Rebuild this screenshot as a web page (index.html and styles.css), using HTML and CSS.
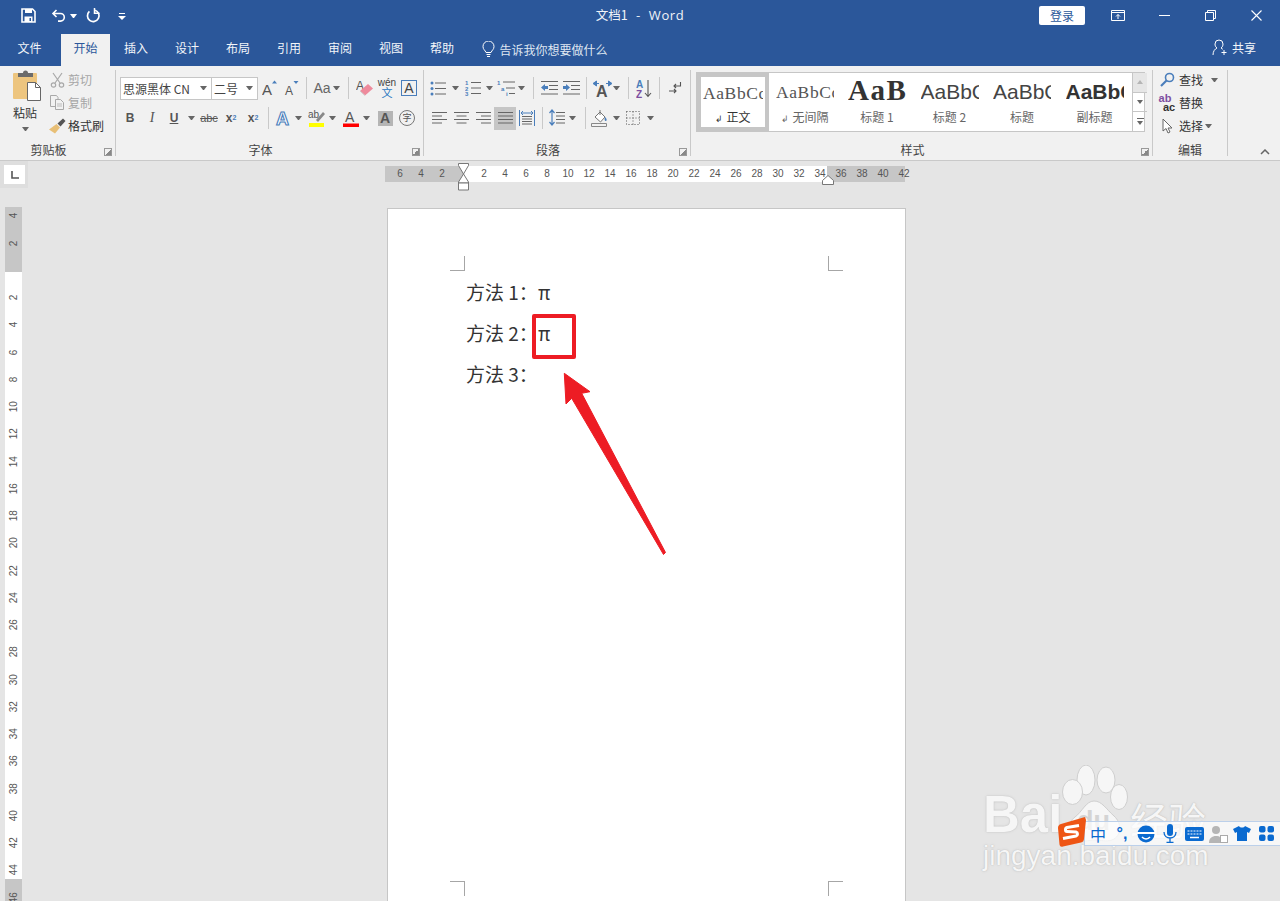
FILE: index.html
```html
<!DOCTYPE html>
<html lang="zh-CN">
<head>
<meta charset="UTF-8" />
<title>文档1 - Word</title>
<link rel="stylesheet" href="styles.css">
</head>
<body>
<!-- title bar -->
<header class="titlebar">
  <div class="qat">
    <svg class="q-save" width="15" height="15" viewBox="0 0 15 15"><path d="M1 1h10.5L14 3.5V14H1z" fill="none" stroke="#fff" stroke-width="1.6"/><path d="M4 1h7v4H4z" fill="#fff"/><path d="M3.5 8.5h8V14h-8z" fill="#fff"/><path d="M8.5 10H10v3H8.5z" fill="#2b579a"/></svg>
    <svg class="q-undo" width="15" height="15" viewBox="0 0 15 15"><path d="M5.5 2 2 5.5 5.5 9M2 5.5h7.5a3.800 3.800 0 0 1 0 7.600H7" fill="none" stroke="#fff" stroke-width="1.6"/></svg>
    <span class="drop white q-d1"></span>
    <svg class="q-redo" width="15" height="15" viewBox="0 0 15 15"><path d="M3.4 3.4A5.8 5.8 0 1 0 9 2.2" fill="none" stroke="#fff" stroke-width="1.7"/><path d="M8.500 0v5.200h5" fill="none" stroke="#fff" stroke-width="1.5"/></svg>
    <svg class="q-more" width="8" height="8" viewBox="0 0 8 8"><path d="M1 1h6v1H1z" fill="#fff"/><path d="M0 4h8L4 8z" fill="#fff"/></svg>
  </div>
  <div class="doc-title">文档1 &nbsp;&nbsp;-&nbsp;&nbsp; <span class="word">Word</span></div>
  <div class="winbtns">
    <span class="login">登录</span>
    <svg class="w-disp" width="14" height="11" viewBox="0 0 14 11"><path d="M.5.5h13v10H.5zM.5 2.5h13M7 9V4.500M5 6.500l2-2 2 2" fill="none" stroke="#fff"/></svg>
    <svg class="w-min" width="11" height="1" viewBox="0 0 11 1"><path d="M0 0h11v1H0z" fill="#fff"/></svg>
    <svg class="w-max" width="11" height="11" viewBox="0 0 11 11"><path d="M.5 2.5h8v8h-8zM2.5 2.5v-2h8v8h-2" fill="none" stroke="#fff"/></svg>
    <svg class="w-close" width="11" height="11" viewBox="0 0 11 11"><path d="M.5.5l10 10M10.500.5l-10 10" fill="none" stroke="#fff" stroke-width="1.100"/></svg>
  </div>
</header>

<!-- tabs -->
<nav class="tabs">
  <span class="tab">文件</span>
  <span class="tab active">开始</span>
  <span class="tab">插入</span>
  <span class="tab">设计</span>
  <span class="tab">布局</span>
  <span class="tab">引用</span>
  <span class="tab">审阅</span>
  <span class="tab">视图</span>
  <span class="tab">帮助</span>
  <span class="tellme">
    <svg width="13" height="17" viewBox="0 0 13 17"><path d="M4 11.500C3 9 1 8.500 1 5.500a5.500 5.500 0 0 1 11 0c0 3-2 3.500-3 6zM4.500 13.500h4M5 15.500h3" fill="none" stroke="#fff"/></svg>
    告诉我你想要做什么
  </span>
  <span class="share">
    <svg width="16" height="17" viewBox="0 0 16 17"><path d="M1 16c0-4 2-6 4-7C3.500 8 3 6.500 3 5a4 4 0 0 1 8 0c0 1.500-.5 3-2 4 .8.400 1.300.800 1.800 1.300" fill="none" stroke="#fff"/><path d="M12 11v5M9.500 13.500h5" stroke="#fff" fill="none"/></svg>
    共享
  </span>
</nav>

<!-- ribbon -->
<section class="ribbon">
  <div class="group g-clip">
    <div class="clip-body">
      <div class="paste">
        <svg width="30" height="32" viewBox="0 0 30 32"><rect x="1" y="3" width="24" height="26" rx="1" fill="#edc57f"/><path d="M6 3h5a2.500 2.500 0 0 1 5 0h5v4H6z" fill="#6b6b6b"/><path d="M15.500 12.500h8l5 5v13h-13z" fill="#fff" stroke="#666"/><path d="M23.500 12.500v5h5" fill="none" stroke="#666"/></svg>
        <span class="paste-label">粘贴</span>
        <span class="drop"></span>
      </div>
      <div class="small-col">
        <div class="small off">
          <span class="sm-ic"><svg width="15" height="16" viewBox="0 0 15 16"><path d="M3 1l7 10M12 1 5 11" stroke="#a8a8a8" stroke-width="1.200" fill="none"/><circle cx="3.500" cy="13" r="2.200" fill="none" stroke="#a8a8a8" stroke-width="1.200"/><circle cx="11.500" cy="13" r="2.200" fill="none" stroke="#a8a8a8" stroke-width="1.200"/></svg></span>剪切
        </div>
        <div class="small off">
          <span class="sm-ic"><svg width="16" height="15" viewBox="0 0 16 15"><path d="M1.500.5h6l1.500 2v9H1.500z" fill="none" stroke="#a8a8a8"/><path d="M6.500 4.500h5l3 3v7h-8z" fill="#f1f1f1" stroke="#a8a8a8"/><path d="M8 9h5M8 11h5" stroke="#bbb"/></svg></span>复制
        </div>
        <div class="small">
          <span class="sm-ic"><svg width="17" height="16" viewBox="0 0 17 16"><path d="M0 11.500 7.500 6l3.500 3.500L6 15.500z" fill="#e8bf76"/><path d="M8.500 5.500 14 .5 16.500 3l-5 5.500z" fill="#555"/></svg></span>格式刷
        </div>
      </div>
    </div>
    <div class="g-label">剪贴板</div>
    <span class="launch"></span>
  </div>

  <div class="group g-font">
    <div class="row">
      <span class="combo c-font">思源黑体 CN<span class="drop"></span></span>
      <span class="combo c-size">二号<span class="drop"></span></span>
      <span class="tool ml1"><svg width="17" height="16" viewBox="0 0 17 16"><text class="glyph" x="0" y="15" font-size="15">A</text><path d="M10 3.500 12.500.5 15 3.500z" fill="#4a7ebb"/></svg></span>
      <span class="tool"><svg width="16" height="15" viewBox="0 0 16 15"><text class="glyph" x="1" y="14" font-size="12">A</text><path d="M9.500 0h5L12 3z" fill="#4a7ebb"/></svg></span>
      <span class="sep ml3"></span>
      <span class="tool ml4 aa">Aa</span>
      <span class="drop"></span>
      <span class="sep ml8"></span>
      <span class="tool ml5"><svg width="18" height="18" viewBox="0 0 18 18"><text class="glyph" x="0" y="11" font-size="12" fill="#888">A</text><path d="M4 12 12 5l5 4.500L9 16.500z" fill="#ee8a9c"/><path d="M4 12l5 4.500" stroke="#ccc" fill="none"/></svg></span>
      <span class="tool wen"><span>wén</span><span class="wen-zi">文</span></span>
      <span class="tool"><span class="boxa">A</span></span>
    </div>
    <div class="row">
      <span class="tool fmt">B</span>
      <span class="tool fmt it">I</span>
      <span class="tool fmt ul">U</span>
      <span class="drop ml3"></span>
      <span class="tool abc ml3">abc</span>
      <span class="tool fmt xs">x<sub>2</sub></span>
      <span class="tool fmt xs">x<sup>2</sup></span>
      <span class="sep ml4"></span>
      <span class="tool ml4"><svg width="20" height="19" viewBox="0 0 20 19"><text class="glyph glow" x="2" y="16" font-size="18">A</text></svg></span>
      <span class="drop"></span>
      <span class="tool ml4 hl"><svg width="18" height="18" viewBox="0 0 18 18"><text class="glyph" x="0" y="9" font-size="10">ab</text><path d="M8 11l7-8 2 2-7 8z" fill="#888"/><path d="M1 14h15v4H1z" fill="#ff0"/></svg></span>
      <span class="drop ml1"></span>
      <span class="tool ml4"><svg width="18" height="18" viewBox="0 0 18 18"><text class="glyph" x="3" y="13" font-size="14">A</text><path d="M1 14.500h16V18H1z" fill="#f00"/></svg></span>
      <span class="drop ml1"></span>
      <span class="tool ml4"><span class="shade">A</span></span>
      <span class="tool"><span class="circ">字</span></span>
    </div>
    <div class="g-label">字体</div>
    <span class="launch"></span>
  </div>

  <div class="group g-para">
    <div class="row">
      <span class="tool"><svg class="lines" width="16" height="15" viewBox="0 0 16 15"><path d="M5 2h11M5 7.500h11M5 13h11"/><g fill="#4a7ebb" stroke="none"><circle cx="2" cy="2" r="1.500"/><circle cx="2" cy="7.500" r="1.500"/><circle cx="2" cy="13" r="1.500"/></g></svg></span>
      <span class="drop ml3"></span>
      <span class="tool ml3"><svg class="lines" width="16" height="16" viewBox="0 0 16 16"><path d="M6 2.500h10M6 8h10M6 13.500h10"/><g class="mini"><text x="0" y="5">1</text><text x="0" y="10.500">2</text><text x="0" y="16">3</text></g></svg></span>
      <span class="drop ml2"></span>
      <span class="tool ml2"><svg class="lines" width="18" height="16" viewBox="0 0 18 16"><path d="M6 2h12M9 8h9M12 13.500h6"/><g class="mini"><text x="0" y="5">1</text><text x="4" y="10.500">a</text><text x="9" y="16">i</text></g></svg></span>
      <span class="drop ml1"></span>
      <span class="sep ml8"></span>
      <span class="tool ml4"><svg class="lines" width="17" height="14" viewBox="0 0 17 14"><path d="M0 .5h17M8 4.500h9M8 8.500h9M0 13h17"/><path d="M0 6.500 4 3v2h3v3H4v2z" fill="#4a7ebb" stroke="none"/></svg></span>
      <span class="tool"><svg class="lines" width="17" height="14" viewBox="0 0 17 14"><path d="M0 .5h17M8 4.500h9M8 8.500h9M0 13h17"/><path d="M7 6.500 3 3v2H0v3h3v2z" fill="#4a7ebb" stroke="none"/></svg></span>
      <span class="sep ml4"></span>
      <span class="tool ml4"><svg width="19" height="17" viewBox="0 0 19 17"><text class="glyph bold" x="3" y="17" font-size="16">A</text><path d="M0 3.500 3.500 1v5zM19 3.500 15.500 1v5zM3 3.500h3M13 3.500h3" fill="#4a7ebb" stroke="#4a7ebb"/></svg></span>
      <span class="drop"></span>
      <span class="sep ml8"></span>
      <span class="tool ml4"><svg width="16" height="19" viewBox="0 0 16 19"><text class="sort-a" x="0" y="9" font-size="10">A</text><text class="sort-z" x="0" y="18.500" font-size="10">Z</text><path d="M12 1v16M9 14l3 3.500 3-3.500" fill="none" stroke="#555" stroke-width="1.100"/></svg></span>
      <span class="sep ml4"></span>
      <span class="tool ml4"><svg width="14" height="14" viewBox="0 0 14 14"><path d="M12.500 1v4H6M8 3 6 5l2 2M1 10h7M6 8l2 2-2 2" fill="none" stroke="#555" stroke-width="1.100"/></svg></span>
    </div>
    <div class="row">
      <span class="tool ml1"><svg class="lines" width="15" height="12" viewBox="0 0 15 12"><path d="M0 .5h15M0 4h10M0 7.500h15M0 11h10"/></svg></span>
      <span class="tool"><svg class="lines" width="15" height="12" viewBox="0 0 15 12"><path d="M0 .5h15M2.500 4h10M0 7.500h15M2.500 11h10"/></svg></span>
      <span class="tool"><svg class="lines" width="15" height="12" viewBox="0 0 15 12"><path d="M0 .5h15M5 4h10M0 7.500h15M5 11h10"/></svg></span>
      <span class="tool on"><svg class="lines" width="15" height="12" viewBox="0 0 15 12"><path d="M0 .5h15M0 4h15M0 7.500h15M0 11h15"/></svg></span>
      <span class="tool"><svg class="lines" width="16" height="16" viewBox="0 0 16 16"><path d="M3 6.500h10M3 9h10M3 11.500h10M3 14h10"/><path d="M.5 0v16M15.500 0v16M2 3h12M4 1 2 3l2 2M12 1l2 2-2 2" stroke="#4a7ebb"/></svg></span>
      <span class="sep ml4"></span>
      <span class="tool ml3"><svg class="lines" width="16" height="18" viewBox="0 0 16 18"><path d="M7 3.500h9M7 7h9M7 10.500h9M7 14h9"/><path d="M3 1v15M.5 4 3 1l2.500 3M.5 13 3 16l2.500-3" stroke="#4a7ebb" stroke-width="1.200"/></svg></span>
      <span class="drop ml1"></span>
      <span class="sep ml9"></span>
      <span class="tool ml3"><svg width="18" height="18" viewBox="0 0 18 18"><path d="M4 8 9 3l5 5-4.500 5z" fill="#fff" stroke="#777"/><path d="M9 1v5" stroke="#777"/><path d="M14 8c2 1.500 2 3.500 1 4-1 .5-2-1-1-4z" fill="#4a7ebb"/><path d="M.5 14.500h15v3H.5z" fill="#f1f1f1" stroke="#888"/></svg></span>
      <span class="drop ml2"></span>
      <span class="tool ml2"><svg width="14" height="14" viewBox="0 0 14 14"><path d="M.5.5h13v13H.5zM7 .5v13M.5 7h13" fill="none" stroke="#555" stroke-dasharray="1 2"/></svg></span>
      <span class="drop ml3"></span>
    </div>
    <div class="g-label">段落</div>
    <span class="launch"></span>
  </div>

  <div class="group g-styles">
    <div class="gallery">
      <div class="style current"><span class="pv pv-serif">AaBbCc</span><span class="st-name"><i>↲</i>正文</span></div>
      <div class="style"><span class="pv pv-serif">AaBbCc</span><span class="st-name"><i>↲</i>无间隔</span></div>
      <div class="style"><span class="pv pv-h1">AaB</span><span class="st-name">标题 1</span></div>
      <div class="style wide"><span class="pv pv-sans">AaBbC</span><span class="st-name">标题 2</span></div>
      <div class="style"><span class="pv pv-sans">AaBbC</span><span class="st-name">标题</span></div>
      <div class="style wide"><span class="pv pv-sub">AaBbC</span><span class="st-name">副标题</span></div>
      <div class="scroll">
        <span class="sc-up"><i class="tri-up"></i></span>
        <span><i class="tri-dn"></i></span>
        <span class="sc-more"><i class="tri-dn"></i></span>
      </div>
    </div>
    <div class="g-label">样式</div>
    <span class="launch"></span>
  </div>

  <div class="group g-edit">
    <div class="small-col">
      <div class="small">
        <span class="sm-ic"><svg width="15" height="15" viewBox="0 0 15 15"><circle cx="9.500" cy="5.500" r="4" fill="none" stroke="#4a7ebb" stroke-width="1.600"/><path d="M6.500 8.500 1 14" stroke="#4a7ebb" stroke-width="2.200"/></svg></span>查找<span class="drop ml8"></span>
      </div>
      <div class="small">
        <span class="sm-ic replace"><b>ab</b><b>ac</b></span>替换
      </div>
      <div class="small">
        <span class="sm-ic"><svg width="11" height="16" viewBox="0 0 11 16"><path d="M1 1v12l3-2.500 2 4.500 2-1-2-4h4z" fill="#fff" stroke="#666"/></svg></span>选择<span class="drop ml2"></span>
      </div>
    </div>
    <div class="g-label">编辑</div>
  </div>

  <svg class="collapse" width="10" height="6" viewBox="0 0 10 6"><path d="M1 5l4-4 4 4" fill="none" stroke="#666" stroke-width="1.500"/></svg>
</section>

<!-- document area -->
<main class="work">
  <div class="tabstop"><span class="tabstop-in"><svg width="8" height="8" viewBox="0 0 8 8"><path d="M1 0v7h7" fill="none" stroke="#555" stroke-width="1.600"/></svg></span></div>

  <div class="hruler">
    <span>6</span><span>4</span><span>2</span><span></span><span>2</span><span>4</span><span>6</span><span>8</span><span>10</span><span>12</span><span>14</span><span>16</span><span>18</span><span>20</span><span>22</span><span>24</span><span>26</span><span>28</span><span>30</span><span>32</span><span>34</span><span>36</span><span>38</span><span>40</span><span>42</span>
    <svg class="indent-l" width="13" height="28" viewBox="0 0 13 28"><path d="M1.500.5h10v2L6.500 11l-5-8.500z" fill="#fff" stroke="#777"/><path d="M6.500 11l5 8v1h-10v-1z" fill="#fff" stroke="#777"/><path d="M1.500 20h10v7h-10z" fill="#fff" stroke="#777"/></svg>
    <svg class="indent-r" width="12" height="10" viewBox="0 0 12 10"><path d="M.5 9.500v-4L6 .5l5.500 5v4z" fill="#fff" stroke="#777"/></svg>
  </div>

  <div class="vruler">
    <span>4</span><span>2</span><span></span><span>2</span><span>4</span><span>6</span><span>8</span><span>10</span><span>12</span><span>14</span><span>16</span><span>18</span><span>20</span><span>22</span><span>24</span><span>26</span><span>28</span><span>30</span><span>32</span><span>34</span><span>36</span><span>38</span><span>40</span><span>42</span><span>44</span><span>46</span>
  </div>

  <article class="page">
    <i class="crop tl"></i><i class="crop tr"></i><i class="crop bl"></i><i class="crop br"></i>
    <p class="line"><span class="lbl">方法 1：</span>π</p>
    <p class="line"><span class="lbl">方法 2：</span>π</p>
    <p class="line"><span class="lbl">方法 3：</span></p>
  </article>
</main>

<!-- annotation drawn over the page -->
<div class="redbox"></div>
<svg class="arrow" width="110" height="190" viewBox="560 370 110 190"><path d="M564.300 373.300 590 391.700 581.700 393.300 665.500 552.500 663.500 554.500 571.700 398.300 566 404z" fill="#ed1c24" stroke="#ed1c24" stroke-linejoin="round"/></svg>

<!-- watermark -->
<div class="mark">
  <svg class="paw" width="72" height="80" viewBox="0 0 72 80"><g fill="#f6f6f6" stroke="#cfcfcf"><ellipse cx="27" cy="15" rx="9" ry="15"/><ellipse cx="47" cy="15" rx="9" ry="13"/><ellipse cx="13.500" cy="27" rx="10" ry="12.500"/><ellipse cx="60" cy="32" rx="8.500" ry="12.500"/><path d="M35 36c8 0 12 8 20 15 8 7 8 20-2 24-6 2-11 0-17 0s-14 3-20-1C8 70 8 58 16 52c7-5 11-16 19-16z"/></g></svg>
  <span class="mark-bai">Bai</span>
  <span class="mark-du">du</span>
  <span class="mark-jy">经验</span>
  <span class="mark-url">jingyan.baidu.com</span>
</div>

<!-- input method bar -->
<div class="ime">
  <svg class="ime-logo" width="28" height="30" viewBox="0 0 28 30"><path d="M3 7 27 0l1 3-2 19c-.2 2-1 3-3 3.500L5 29.500c-2 .5-3 0-3.500-2L0 11c0-2 1-3.500 3-4z" fill="#ee5514"/><path d="M21 8.500 9 10.500c-2 .5-2 4 0 4l9 .5c2 .5 2 3.500 0 4L5 21.500" fill="none" stroke="#fff" stroke-width="3"/></svg>
  <span class="ime-i ime-zh">中</span>
  <span class="ime-i ime-pt">°,</span>
  <span class="ime-i"><svg width="18" height="18" viewBox="0 0 18 18"><circle cx="9" cy="9" r="8.500" fill="#0a6ad0"/><path d="M0 8h18" stroke="#fff" stroke-width="2"/><path d="M5 12c2 2.500 6 2.500 8 0" stroke="#fff" stroke-width="1.500" fill="none"/></svg></span>
  <span class="ime-i"><svg width="14" height="19" viewBox="0 0 14 19"><rect x="4" y="0" width="6" height="12" rx="3" fill="#0a6ad0"/><path d="M1 8c0 8 12 8 12 0M7 14v4M3.500 18.500h7" fill="none" stroke="#0a6ad0" stroke-width="1.300"/></svg></span>
  <span class="ime-i"><svg width="19" height="14" viewBox="0 0 19 14"><rect width="19" height="14" rx="2" fill="#0a6ad0"/><path d="M2.500 4h14M2.500 7h14" stroke="#fff" stroke-dasharray="2 1"/><path d="M5 10.500h9" stroke="#fff" stroke-width="1.500"/></svg></span>
  <span class="ime-i"><svg width="19" height="18" viewBox="0 0 19 18"><circle cx="7" cy="5" r="4" fill="#b5b5b5"/><path d="M0 18c0-5 3-7 7-7s4 1 4 2v5z" fill="#b5b5b5"/><rect x="11.500" y="10.500" width="7" height="7" fill="#fff" stroke="#aaa"/></svg></span>
  <span class="ime-i"><svg width="18" height="15" viewBox="0 0 18 15"><path d="M6 0C7 2 11 2 12 0l6 3-2 4-2-1v9H4V6L2 7 0 3z" fill="#0a6ad0"/></svg></span>
  <span class="ime-i"><svg width="15" height="15" viewBox="0 0 15 15"><g fill="#0a6ad0"><rect width="6.500" height="6.500" rx="2"/><rect x="8.500" width="6.500" height="6.500" rx="2"/><rect y="8.500" width="6.500" height="6.500" rx="2"/><rect x="8.500" y="8.500" width="6.500" height="6.500" rx="2"/></g></svg></span>
</div>
</body>
</html>
```
FILE: styles.css
```css
* {
  box-sizing: border-box;
}
html, body {
  margin: 0;
  height: 901px;
  overflow: hidden;
}
body {
  font-family: "Noto Sans CJK SC", "Liberation Sans", sans-serif;
  font-size: 12px;
  background: #e5e5e5;
  color: #444;
  position: relative;
}

/* title bar */
.titlebar {
  height: 34px;
  background: #2b579a;
  color: #fff;
  display: grid;
  grid-template-columns: 1fr auto 1fr;
  align-items: center;
}
.qat {
  display: flex;
  align-items: center;
  padding-left: 21px;
  padding-bottom: 3px;
}
.q-undo { margin-left: 15px; }
.q-d1 { margin-left: 4px; }
.q-redo { margin-left: 9px; }
.q-more { margin-left: 17px; }
.doc-title {
  font-size: 12.5px;
  line-height: 30px;
  padding-bottom: 4px;
  color: #f0f3f8;
}
.word {
  font-family: "Open Sans", sans-serif;
  font-size: 13px;
  letter-spacing: .6px;
}
.winbtns {
  display: flex;
  align-items: center;
  justify-content: flex-end;
  padding-bottom: 4px;
  padding-right: 18px;
}
.login {
  width: 46px;
  height: 19px;
  line-height: 19px;
  background: #fff;
  color: #2b579a;
  text-align: center;
  border-radius: 2px;
}
.w-disp { margin-left: 26px; }
.w-min { margin-left: 34px; }
.w-max { margin-left: 35px; }
.w-close { margin-left: 35px; }

/* tabs */
.tabs {
  height: 32px;
  background: #2b579a;
  color: #f2f5f9;
  display: flex;
  padding-left: 4px;
  line-height: 28px;
}
.tab {
  width: 51px;
  text-align: center;
}
.tab.active {
  width: 49px;
  margin-left: 6px;
  margin-right: .5px;
  background: #f1f1f1;
  color: #2b579a;
}
.tellme {
  display: flex;
  align-items: center;
  gap: 5px;
  margin-left: 14px;
  padding-bottom: 1px;
  color: #dfe6f1;
}
.share {
  display: flex;
  align-items: center;
  gap: 4px;
  margin-left: auto;
  margin-right: 24px;
  padding-bottom: 5px;
}

/* ribbon */
.ribbon {
  height: 95px;
  background: #f1f1f1;
  border-bottom: 1px solid #c9c9c9;
  display: flex;
  position: relative;
  padding-top: 4px;
}
.group {
  height: 86px;
  border-right: 1px solid #c9c9c9;
  position: relative;
}
.g-clip { width: 116px; }
.g-font { width: 308px; padding-left: 3px; padding-top: 3px; }
.g-para { width: 267px; padding-left: 3px; padding-top: 3px; }
.g-styles { width: 462px; padding-left: 5px; padding-top: 2px; }
.g-edit { width: 75px; }
.g-label {
  position: absolute;
  left: 0;
  right: 18px;
  bottom: -1px;
  height: 14px;
  line-height: 14px;
  text-align: center;
  color: #444;
}
.g-edit .g-label {
  right: 0;
}
.launch {
  position: absolute;
  right: 3px;
  bottom: 0;
  width: 8px;
  height: 8px;
  border: 1px solid #999;
  background: linear-gradient(135deg, #f1f1f1 50%, #888 50%);
}
.collapse {
  position: absolute;
  right: 10px;
  bottom: 5px;
}
.row {
  height: 30px;
  display: flex;
  align-items: center;
}
.tool {
  width: 22px;
  height: 23px;
  flex: none;
  display: flex;
  align-items: center;
  justify-content: center;
  color: #555;
}
.tool.on {
  background: #c6c6c6;
}
.sep {
  width: 1px;
  height: 22px;
  flex: none;
  background: #c9c9c9;
}
.drop {
  width: 7px;
  height: 4px;
  flex: none;
  display: inline-block;
  border-top: 4px solid #666;
  border-left: 3.5px solid transparent;
  border-right: 3.5px solid transparent;
}
.drop.white {
  border-top-color: #fff;
}
.ml1 { margin-left: 1px; }
.ml2 { margin-left: 2px; }
.ml3 { margin-left: 3px; }
.ml4 { margin-left: 4px; }
.ml5 { margin-left: 5px; }
.ml8 { margin-left: 8px; }
.ml9 { margin-left: 9px; }

/* clipboard + editing small buttons */
.clip-body {
  display: flex;
}
.paste {
  width: 48px;
  padding-left: 2px;
  display: flex;
  flex-direction: column;
  align-items: center;
  color: #333;
}
.paste svg {
  margin-left: 4px;
  flex: none;
}
.paste-label {
  line-height: 17px;
  margin-top: 2px;
}
.paste .drop {
  margin-top: 6px;
}
.small-col {
  margin-top: -2px;
}
.small {
  height: 23px;
  display: flex;
  align-items: center;
  color: #333;
  white-space: nowrap;
}
.small.off {
  color: #a6a6a6;
}
.sm-ic {
  width: 18px;
  height: 18px;
  margin-right: 2px;
  display: flex;
  align-items: center;
  justify-content: center;
  flex: none;
}
.g-edit .small-col {
  padding-left: 5px;
}
.g-edit .sm-ic {
  margin-right: 3px;
}
.replace {
  flex-direction: column;
  font-family: "Liberation Sans", sans-serif;
  font-size: 11px;
  line-height: 9px;
}
.replace b:first-child {
  color: #7d4ea0;
  margin-right: 4px;
}
.replace b:last-child {
  color: #333;
  margin-left: 4px;
}

/* font group */
.combo {
  height: 23px;
  background: #fff;
  border: 1px solid #c6c6c6;
  display: flex;
  align-items: center;
  justify-content: space-between;
  padding: 0 4px 0 2px;
  color: #444;
  flex: none;
}
.c-font {
  width: 92px;
  margin-left: 1px;
}
.c-size {
  width: 47px;
  margin-left: -1px;
}
.glyph {
  font-family: "Liberation Sans", sans-serif;
  fill: #555;
}
.bold {
  font-weight: bold;
}
.glow {
  font-weight: bold;
  fill: #fff;
  stroke: #4a7ebb;
  stroke-width: 1.1px;
}
.aa {
  font-family: "Liberation Sans", sans-serif;
  font-size: 14px;
  color: #666;
}
.fmt {
  font-family: "Liberation Sans", sans-serif;
  font-size: 12px;
  font-weight: bold;
  color: #555;
}
.it {
  font-family: "Liberation Serif", serif;
  font-style: italic;
  font-size: 14px;
  font-weight: normal;
}
.ul {
  text-decoration: underline;
}
.xs sub, .xs sup {
  font-size: 7px;
  color: #4a7ebb;
  line-height: 0;
}
.abc {
  font-family: "Liberation Sans", sans-serif;
  font-size: 11px;
  text-decoration: line-through;
  color: #555;
}
.wen {
  flex-direction: column;
  font-family: "Liberation Sans", sans-serif;
  font-size: 10px;
  line-height: 9px;
  color: #444;
}
.wen-zi {
  color: #2b79c2;
  font-family: "Noto Sans CJK SC", sans-serif;
  line-height: 11px;
  font-size: 11px;
}
.boxa {
  width: 16px;
  height: 16px;
  border: 1px solid #4a7ebb;
  font-family: "Liberation Sans", sans-serif;
  font-size: 14px;
  line-height: 14px;
  text-align: center;
  color: #444;
}
.shade {
  width: 15px;
  height: 15px;
  background: #b5b5b5;
  font-family: "Liberation Sans", sans-serif;
  font-size: 14px;
  font-weight: bold;
  line-height: 15px;
  text-align: center;
  color: #555;
}
.circ {
  width: 16px;
  height: 16px;
  border: 1px solid #777;
  border-radius: 50%;
  font-size: 9px;
  line-height: 14px;
  text-align: center;
}

/* paragraph group */
.lines {
  fill: none;
  stroke: #666;
}
.mini {
  font-family: "Liberation Sans", sans-serif;
  font-size: 6px;
  font-weight: bold;
  fill: #4a7ebb;
  stroke: none;
}
.sort-a {
  font-family: "Liberation Sans", sans-serif;
  font-weight: bold;
  fill: #4a7ebb;
}
.sort-z {
  font-family: "Liberation Sans", sans-serif;
  font-weight: bold;
  fill: #7d4ea0;
}

/* style gallery */
.gallery {
  width: 449px;
  height: 60px;
  background: #fff;
  border: 1px solid #c6c6c6;
  display: flex;
}
.style {
  width: 72px;
  flex: none;
  display: flex;
  flex-direction: column;
  align-items: center;
  color: #666;
}
.style.wide {
  width: 73px;
}
.style.current {
  border: 4px solid #c6c6c6;
  width: 72px;
  height: 58px;
  color: #333;
}
.pv {
  width: 58px;
  height: 36px;
  line-height: 38px;
  overflow: hidden;
  white-space: nowrap;
  flex: none;
  color: #555;
}
.current .pv {
  height: 32px;
  line-height: 32px;
  width: 60px;
}
.pv-serif {
  font-family: "Liberation Serif", serif;
  font-size: 17.5px;
  letter-spacing: .6px;
}
.pv-h1 {
  font-family: "Liberation Serif", serif;
  font-size: 29px;
  font-weight: bold;
  line-height: 34px;
  letter-spacing: 1.5px;
  color: #333;
}
.pv-sans {
  font-family: "Liberation Sans", sans-serif;
  font-size: 21px;
  color: #444;
}
.pv-sub {
  font-family: "Liberation Sans", sans-serif;
  font-size: 21px;
  font-weight: bold;
  color: #333;
}
.st-name {
  line-height: 16px;
  white-space: nowrap;
}
.st-name i {
  font-style: normal;
  font-size: 9px;
  margin-right: 3px;
}
.scroll {
  width: 15px;
  margin-left: 1px;
  flex: none;
  display: flex;
  flex-direction: column;
  border-left: 1px solid #c6c6c6;
}
.scroll span {
  flex: 1;
  display: flex;
  align-items: center;
  justify-content: center;
  border-bottom: 1px solid #c6c6c6;
}
.scroll span:last-child {
  border-bottom: 0;
}
.sc-up {
  background: #e6e6e6;
}
.sc-more {
  flex-direction: column;
  gap: 2px;
}
.sc-more::before {
  content: "";
  width: 7px;
  height: 1px;
  background: #666;
}
.tri-up {
  border-bottom: 4px solid #b5b5b5;
  border-left: 3.5px solid transparent;
  border-right: 3.5px solid transparent;
}
.tri-dn {
  border-top: 4px solid #666;
  border-left: 3.5px solid transparent;
  border-right: 3.5px solid transparent;
}

/* document area */
.work {
  height: 740px;
  display: grid;
  grid-template-columns: 387px 519px 1fr;
  grid-template-rows: 47px 1fr;
  overflow: hidden;
}
.tabstop {
  width: 28px;
  height: 27px;
  background: #dedede;
  padding: 4px 0 0 4px;
}
.tabstop-in {
  width: 21px;
  height: 19px;
  background: #fff;
  display: flex;
  align-items: center;
  justify-content: center;
}
.hruler {
  grid-column: 2;
  width: 520px;
  height: 16px;
  margin: 5px 0 0 -2px;
  background: linear-gradient(90deg, #c6c6c6 78px, #fff 78px, #fff 442px, #c6c6c6 442px);
  display: flex;
  padding-left: 4.5px;
  position: relative;
  font-family: "Liberation Sans", sans-serif;
  font-size: 10px;
  line-height: 16px;
  color: #555;
}
.hruler span {
  width: 21px;
  flex: none;
  text-align: center;
}
.indent-l {
  position: absolute;
  left: 72px;
  top: -3px;
}
.indent-r {
  position: absolute;
  left: 437px;
  top: 9px;
}
.vruler {
  grid-column: 1;
  grid-row: 2;
  width: 17px;
  margin-left: 5px;
  margin-top: -1px;
  height: 700px;
  background: linear-gradient(180deg, #c6c6c6 65px, #fff 65px, #fff 672px, #c6c6c6 672px);
  display: flex;
  flex-direction: column;
  overflow: hidden;
  font-family: "Liberation Sans", sans-serif;
  font-size: 10px;
  color: #555;
}
.vruler span {
  height: 27.25px;
  flex: none;
  display: flex;
  align-items: center;
  justify-content: center;
  writing-mode: vertical-rl;
  transform: rotate(180deg);
}
.vruler span:first-child {
  margin-top: -4.6px;
}
.page {
  grid-column: 2;
  grid-row: 2;
  height: 720px;
  background: #fff;
  border: 1px solid #c6c6c6;
  border-bottom: 0;
  padding: 62px 0 0 78px;
  position: relative;
  font-size: 19px;
  color: #333;
}
.line {
  margin: 0;
  height: 41px;
  line-height: 41px;
  display: flex;
}
.lbl {
  width: 72px;
  white-space: pre;
}
.crop {
  position: absolute;
  width: 15px;
  height: 15px;
  border: 0 solid #a6a6a6;
}
.crop.tl { left: 62px; top: 47px; border-width: 0 1px 1px 0; }
.crop.tr { left: 440px; top: 47px; border-width: 0 0 1px 1px; }
.crop.bl { left: 62px; top: 672px; border-width: 1px 1px 0 0; }
.crop.br { left: 440px; top: 672px; border-width: 1px 0 0 1px; }

/* annotation */
.redbox {
  position: absolute;
  left: 532px;
  top: 314px;
  width: 44px;
  height: 45px;
  border: 4.5px solid #ed1c24;
  border-radius: 2px;
}
.arrow {
  position: absolute;
  left: 560px;
  top: 370px;
}

/* watermark */
.mark {
  position: absolute;
  left: 980px;
  top: 760px;
  width: 240px;
  height: 115px;
  color: #f6f6f6;
  text-shadow: 0 0 1px #b5b5b5, 0 0 3px #cfcfcf;
}
.mark span {
  position: absolute;
  white-space: nowrap;
}
.paw {
  position: absolute;
  left: 79px;
  top: 5px;
}
.mark-bai {
  left: 3px;
  top: 26px;
  font-family: "Liberation Sans", sans-serif;
  font-size: 51px;
  font-weight: bold;
  line-height: 58px;
}
.mark-du {
  left: 97px;
  top: 46px;
  font-family: "Liberation Sans", sans-serif;
  font-size: 27px;
  font-weight: bold;
  line-height: 30px;
  color: #d4d4d4;
  text-shadow: none;
}
.mark-jy {
  left: 150px;
  top: 37px;
  font-size: 38px;
  line-height: 44px;
}
.mark-url {
  left: 3px;
  top: 80px;
  font-family: "Liberation Sans", sans-serif;
  font-size: 28px;
  line-height: 32px;
}

/* input method bar */
.ime {
  position: absolute;
  left: 1084px;
  top: 821px;
  width: 196px;
  height: 25px;
  background: rgba(255,255,255,.7);
  border: 1px solid #bcd0ea;
  border-right: 0;
  display: flex;
  align-items: center;
  padding-left: 1px;
}
.ime-logo {
  position: absolute;
  left: -27px;
  top: -5px;
}
.ime-i {
  width: 24px;
  flex: none;
  display: flex;
  align-items: center;
  justify-content: center;
  color: #0a6ad0;
}
.ime-zh {
  font-size: 16px;
  line-height: 20px;
}
.ime-pt {
  font-family: "Liberation Sans", sans-serif;
  font-size: 16px;
  font-weight: bold;
  line-height: 20px;
}
```
